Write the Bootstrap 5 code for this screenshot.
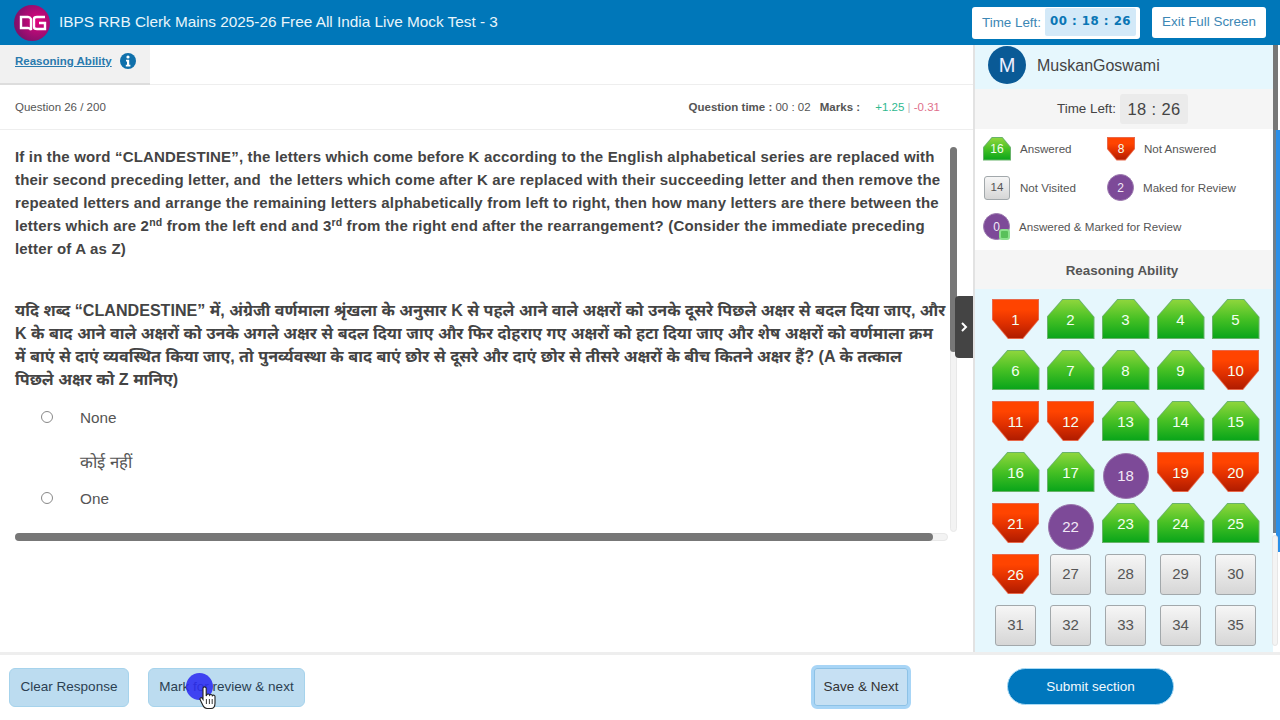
<!DOCTYPE html>
<html lang="en">
<head>
  <meta charset="UTF-8">
  <title>IBPS RRB Clerk Mains Mock Test</title>
  <link rel="stylesheet" href="https://cdn.jsdelivr.net/npm/bootstrap@5.3.0/dist/css/bootstrap.min.css">
  <style>
    html, body { height: 720px; overflow: hidden; }
    body { font-family: "Liberation Sans", Arial, sans-serif; color: #444; background: #fff; position: relative; }

    /* top bar */
    .top-bar { height: 45px; background: #0077b9; color: #e9f5fb; padding: 0 14px 0 14px; }
    .logo-mark { width: 36px; height: 36px; flex: none; }
    .test-title { font-size: 15.35px; margin-left: 9px; margin-top: -1px; }
    .time-box { height: 32px; width: 168px; background: #fff; border-radius: 3px; font-size: 13.4px; color: #3d87b5; padding: 1px 4px 3px 10px; white-space: nowrap; }
    .time-label { margin-top: 3px; }
    .time-value { flex: 1; height: 28px; background: #d3e9f8; border-radius: 2px; margin-left: 4px; color: #0a76b5; font-weight: 700; letter-spacing: .5px; font-family: "DejaVu Sans", sans-serif; font-size: 11.8px; white-space: nowrap; }
    .exit-btn { width: 114px; height: 31px; background: #fff; border-radius: 3px; font-size: 13.4px; color: #3d87b5; margin-left: 12px; }

    /* left side */
    .main-row { height: 607px; }
    .left-side { width: 973px; flex: none; position: relative; }
    .tab-row { height: 40px; border-bottom: 1px solid #eee; }
    .section-tab { width: 150px; height: 40px; background: #f1f1f1; border-bottom: 2px solid #ddd; padding-left: 15px; padding-top: 8px; }
    .section-tab a { font-size: 11.5px; font-weight: 700; color: #2a7aae; line-height: 17px; }
    .info-dot { width: 16px; height: 16px; margin-left: 8px; }
    .question-row { height: 45px; border-bottom: 1px solid #eee; padding: 2px 33px 0 15px; font-size: 11.5px; color: #555; }
    .marks-label { margin-left: 6px; }
    .mark-plus { color: #2fb98f; margin-left: 12px; }
    .mark-minus { color: #e0708c; }
    .mark-sep { color: #bbb; }
    .q-text { padding: 15px 0 0 15px; font-size: 15px; letter-spacing: .17px; font-weight: 700; line-height: 23px; color: #444; white-space: nowrap; }
    .q-text sup { font-size: 10.5px; }
    .q-hindi { font-family: "Liberation Sans", "Noto Sans Devanagari", "Noto Sans", sans-serif; font-size: 16.1px; letter-spacing: 0; margin-top: 39px; }
    .opt-row { font-size: 15.3px; color: #555; padding-left: 41px; height: 45px; }
    .opt-first { margin-top: 5px; }
    .opt-radio { width: 12px; height: 12px; border: 1px solid #888; border-radius: 50%; margin-right: 27px; margin-top: -3px; flex: none; background: #fff; }
    .opt-hindi { padding: 10px 0 0 80px; font-size: 16.7px; line-height: 24px; color: #555; height: 36px; }

    /* fake scrollbars */
    .v-track { position: absolute; left: 950px; top: 102px; width: 7px; height: 385px; background: #f3f3f3; border: 1px solid #e8e8e8; border-radius: 4px; }
    .v-thumb { position: absolute; left: -1px; top: -1px; width: 7px; height: 205px; background: #777; border-radius: 4px; }
    .h-track { position: absolute; left: 15px; top: 488px; width: 933px; height: 8px; background: #f3f3f3; border: 1px solid #e8e8e8; border-radius: 4px; }
    .h-thumb { position: absolute; left: -1px; top: -1px; width: 918px; height: 8px; background: #777; border-radius: 4px; }
    .panel-toggle { position: absolute; left: 955px; top: 251px; width: 18px; height: 62px; background: #444; border-radius: 4px 0 0 4px; color: #fff; }

    /* right panel */
    .right-side { width: 300px; flex: none; border-left: 2px solid #e2e2e2; }
    .user-row { height: 44px; background: #e6f7fd; padding-left: 13px; }
    .user-avatar { width: 38px; height: 38px; border-radius: 50%; background: #0a5a96; color: #eef; font-size: 20px; margin-top: -4px; }
    .user-name { font-size: 16px; margin-left: 11px; margin-top: -3px; color: #444; }
    .time-row { height: 40px; background: #f5f5f5; font-size: 13.4px; padding-left: 82px; }
    .time-chip { width: 68px; height: 30px; background: #ebebeb; border-radius: 3px; font-size: 16.5px; letter-spacing: .4px; margin-left: 4px; color: #444; }
    .legend { height: 121px; padding: 0 0 0 8px; font-size: 11.6px; color: #555; }
    .legend-row { height: 39px; }
    .legend-col { width: 124px; }
    .legend-label { margin-left: 9px; }
    .legend-gap { margin-left: 10px; }
    .section-title { height: 39px; background: #f5f5f5; font-size: 13.4px; font-weight: 700; color: #555; padding: 3px 4px 0 0; }
    .palette { height: 363px; background: #e6f7fd; padding: 10px 0 0 13px; display: grid; grid-template-columns: repeat(5, 55px); grid-auto-rows: 51px; justify-items: center; align-content: start; overflow: hidden; }

    /* question status shapes */
    .q-shape { position: relative; width: 48px; height: 40px; font-size: 15px; color: #f4fff0; }
    .q-shape::before, .q-shape::after { content: ""; position: absolute; }
    .q-shape::before { inset: 0; }
    .q-shape::after { inset: 1px; }
    .q-shape span { position: relative; z-index: 1; top: 1px; }
    .q-green::before, .q-green::after { clip-path: polygon(33% 0, 68% 0, 100% 45%, 100% 100%, 0 100%, 0 45%); }
    .q-green::before { background: #68b36a; }
    .q-green::after { background: linear-gradient(#8ed63c, #46c024 50%, #0aa51a); }
    .q-red::before, .q-red::after { clip-path: polygon(0 0, 100% 0, 100% 52%, 66% 100%, 34% 100%, 0 52%); }
    .q-red { width: 47px; }
    .q-red::before { background: #e8684a; }
    .q-red::after { background: linear-gradient(#ff4400 25%, #e03000 60%, #b01c00); }
    .q-gray { width: 41px; height: 41px; background: linear-gradient(#f6f6f6, #d6d6d6); border: 1px solid #a2a8ab; border-radius: 3px; color: #555; font-size: 15px; }
    .q-purple { width: 46px; height: 46px; border-radius: 50%; background: #7d4a98; border: 1px solid #9a78ad; color: #f2e8f6; font-size: 15px; margin-top: 1px; }
    .q-small { width: 28px; height: 24px; font-size: 12px; flex: none; }
    .q-small span { top: 0; }
    .q-small-gray { width: 26px; height: 24px; font-size: 11.5px; flex: none; margin-left: 1px; }
    .q-small-purple { width: 27px; height: 27px; font-size: 12px; flex: none; margin: 0; position: relative; }
    .tick-badge { position: absolute; right: -1px; bottom: -1px; width: 11px; height: 11px; border-radius: 3px; background: #59c05a; border: 2px solid #8de08e; }

    .rail-gray { position: absolute; left: 1273px; top: 45px; width: 5px; height: 85px; background: #777; }
    .rail-blue { position: absolute; left: 1273px; top: 130px; width: 3px; height: 403px; background: #6f7f8c; }
    .rail-light { position: absolute; left: 1276px; top: 130px; width: 4px; height: 422px; background: #2b8fe8; }
    .rail-end { position: absolute; left: 1272px; top: 535px; width: 6px; height: 111px; background: #f4f4f4; border: 1px solid #e6e6e6; border-radius: 3px; }

    /* bottom bar */
    .bottom-bar { height: 68px; border-top: 3px solid #eee; padding: 8px 0 0 9px; }
    .act-btn { height: 39px; background: #bcdcf0; border: 1px solid #a6d3ec; border-radius: 6px; color: #2b3f52; font-size: 13.5px; padding: 0; margin-top: 5px; }
    .act-clear { width: 120px; }
    .act-mark { width: 157px; margin-left: 19px; }
    .act-save { width: 100px; height: 44px; margin-left: 506px; margin-top: 2px; background: #c6e0f3; border: 3px solid #a8d5f6; color: #333; box-shadow: inset 0 0 0 1px #8dc2e6; }
    .act-submit { width: 167px; height: 37px; margin-left: 96px; border-radius: 19px; background: #0077bd; color: #f2f9fd; border: 1px solid #a9daf5; padding-top: 1px; }

    .click-dot { position: absolute; left: 186px; top: 673px; width: 27px; height: 27px; border-radius: 50%; background: rgba(44, 44, 240, .88); }
    .hand-cursor { position: absolute; left: 199px; top: 686px; width: 18px; height: 24px; }
  </style>
</head>
<body>

  <!-- Top bar -->
  <div class="top-bar d-flex align-items-center">
    <svg class="logo-mark" viewBox="0 0 36 36">
      <defs>
        <radialGradient id="logoFill" cx="65%" cy="45%" r="70%">
          <stop offset="0" stop-color="#e2057f"/>
          <stop offset="1" stop-color="#741268"/>
        </radialGradient>
      </defs>
      <circle cx="18" cy="18" r="18" fill="url(#logoFill)"/>
      <path d="M7 12h7q2 0 3 2v11q-1-2-3-2H7z" fill="none" stroke="#fff" stroke-width="2.4"/>
      <path d="M31 12h-8q-3 0-3 2v8q0 2 3 2h8v-6h-6" fill="none" stroke="#fff" stroke-width="2.4"/>
    </svg>
    <div class="test-title">IBPS RRB Clerk Mains 2025-26 Free All India Live Mock Test - 3</div>
    <div class="ms-auto time-box d-flex align-items-center">
      <span class="time-label">Time Left:</span>
      <div class="time-value d-flex align-items-center justify-content-center">00 : 18 : 26</div>
    </div>
    <div class="exit-btn d-flex align-items-center justify-content-center">Exit Full Screen</div>
  </div>

  <div class="main-row d-flex">
    <!-- Question area -->
    <div class="left-side">
      <div class="tab-row">
        <div class="section-tab d-flex align-items-start">
          <a href="#">Reasoning Ability</a>
          <svg class="info-dot" viewBox="0 0 16 16">
            <circle cx="8" cy="8" r="8" fill="#0f70ab"/>
            <circle cx="8" cy="4" r="1.6" fill="#fff"/>
            <path d="M6 6.8h3.2v5H10.4v1.6H5.8v-1.6H7V8.4H6z" fill="#fff"/>
          </svg>
        </div>
      </div>
      <div class="question-row d-flex align-items-center justify-content-between">
        <div>Question 26 / 200</div>
        <div><b>Question time :</b> 00 : 02 <b class="marks-label">Marks :</b> <span class="mark-plus">+1.25</span> <span class="mark-sep">|</span> <span class="mark-minus">-0.31</span></div>
      </div>
      <div class="q-text">
        If in the word “CLANDESTINE”, the letters which come before K according to the English alphabetical series are replaced with<br>
        their second preceding letter, and &nbsp;the letters which come after K are replaced with their succeeding letter and then remove the<br>
        repeated letters and arrange the remaining letters alphabetically from left to right, then how many letters are there between the<br>
        letters which are 2<sup>nd</sup> from the left end and 3<sup>rd</sup> from the right end after the rearrangement? (Consider the immediate preceding<br>
        letter of A as Z)
        <div class="q-hindi">
          यदि शब्द “CLANDESTINE” में, अंग्रेजी वर्णमाला श्रृंखला के अनुसार K से पहले आने वाले अक्षरों को उनके दूसरे पिछले अक्षर से बदल दिया जाए, और<br>
          K के बाद आने वाले अक्षरों को उनके अगले अक्षर से बदल दिया जाए और फिर दोहराए गए अक्षरों को हटा दिया जाए और शेष अक्षरों को वर्णमाला क्रम<br>
          में बाएं से दाएं व्यवस्थित किया जाए, तो पुनर्व्यवस्था के बाद बाएं छोर से दूसरे और दाएं छोर से तीसरे अक्षरों के बीच कितने अक्षर हैं? (A के तत्काल<br>
          पिछले अक्षर को Z मानिए)
        </div>
      </div>
      <div class="opt-row opt-first d-flex align-items-center"><span class="opt-radio"></span><span>None</span></div>
      <div class="opt-hindi">कोई नहीं</div>
      <div class="opt-row d-flex align-items-center"><span class="opt-radio"></span><span>One</span></div>

      <div class="v-track"><div class="v-thumb"></div></div>
      <div class="h-track"><div class="h-thumb"></div></div>
      <div class="panel-toggle d-flex align-items-center justify-content-center">
        <svg width="8" height="10" viewBox="0 0 8 10"><path d="M2 1l4 4-4 4" fill="none" stroke="#fff" stroke-width="2"/></svg>
      </div>
    </div>

    <!-- Right panel -->
    <div class="right-side">
      <div class="user-row d-flex align-items-center">
        <div class="user-avatar d-flex align-items-center justify-content-center">M</div>
        <div class="user-name">MuskanGoswami</div>
      </div>
      <div class="time-row d-flex align-items-center">
        <span>Time Left:</span>
        <div class="time-chip d-flex align-items-center justify-content-center">18 : 26</div>
      </div>
      <div class="legend">
        <div class="legend-row d-flex align-items-center">
          <div class="legend-col d-flex align-items-center"><div class="q-shape q-green q-small d-flex align-items-center justify-content-center"><span>16</span></div><span class="legend-label">Answered</span></div>
          <div class="d-flex align-items-center"><div class="q-shape q-red q-small d-flex align-items-center justify-content-center"><span>8</span></div><span class="legend-label">Not Answered</span></div>
        </div>
        <div class="legend-row d-flex align-items-center">
          <div class="legend-col d-flex align-items-center"><div class="q-gray q-small-gray d-flex align-items-center justify-content-center">14</div><span class="legend-gap">Not Visited</span></div>
          <div class="d-flex align-items-center"><div class="q-purple q-small-purple d-flex align-items-center justify-content-center">2</div><span class="legend-label">Maked for Review</span></div>
        </div>
        <div class="legend-row d-flex align-items-center">
          <div class="q-purple q-small-purple d-flex align-items-center justify-content-center">0<span class="tick-badge"></span></div><span class="legend-label">Answered &amp; Marked for Review</span>
        </div>
      </div>
      <div class="section-title d-flex align-items-center justify-content-center">Reasoning Ability</div>
      <div class="palette" id="palette"></div>
    </div>
  </div>

  <!-- Bottom actions -->
  <div class="bottom-bar d-flex align-items-start">
    <button class="btn act-btn act-clear">Clear Response</button>
    <button class="btn act-btn act-mark">Mark for review &amp; next</button>
    <button class="btn act-btn act-save">Save &amp; Next</button>
    <button class="btn act-btn act-submit">Submit section</button>
  </div>

  <div class="rail-gray"></div>
  <div class="rail-light"></div>
  <div class="rail-blue"></div>
  <div class="rail-end"></div>

  <div class="click-dot"></div>
  <svg class="hand-cursor" viewBox="0 0 18 24">
    <path d="M4 2.5a1.6 1.6 0 0 1 3.2 0V10l.6-1.2a1.5 1.5 0 0 1 2.8.4 1.5 1.5 0 0 1 2.7.5 1.5 1.5 0 0 1 2.7 1V17c0 3-1.5 5.5-4 5.5H8c-2 0-3-1-4-3L1.2 13.8c-.8-1.7 1-2.8 2-1.6L4 13.4z" fill="#fff" stroke="#222" stroke-width="1.1"/>
    <path d="M7.4 13v5M10.4 13v5M13.2 13v5" stroke="#222" stroke-width=".9"/>
  </svg>

  <script>
    // g answered, r not answered, p review, n not visited
    const statuses = 'rggggggggrrrggggg' + 'prrrpgggr';
    const palette = document.getElementById('palette');
    const shapeClass = { g: 'q-shape q-green', r: 'q-shape q-red', p: 'q-purple', n: 'q-gray' };
    for (let n = 1; n <= 35; n++) {
      const st = statuses[n - 1] || 'n';
      const cell = document.createElement('div');
      cell.className = shapeClass[st] + ' d-flex align-items-center justify-content-center';
      cell.innerHTML = '<span>' + n + '</span>';
      palette.appendChild(cell);
    }
  </script>
  <script src="https://cdn.jsdelivr.net/npm/bootstrap@5.3.0/dist/js/bootstrap.bundle.min.js"></script>
</body>
</html>
